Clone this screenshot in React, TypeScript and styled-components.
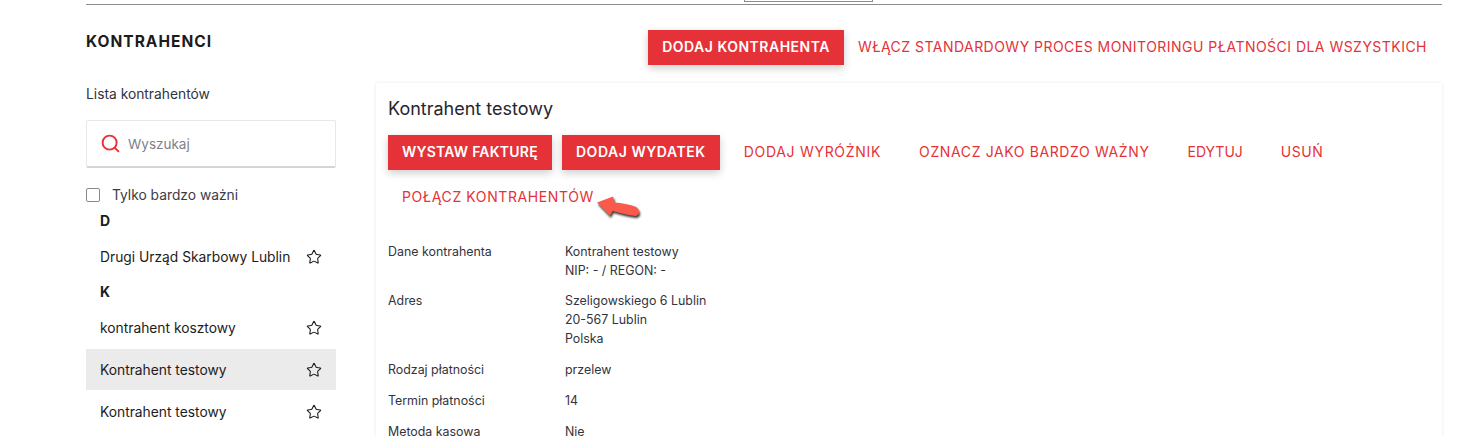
import styled, { createGlobalStyle } from "styled-components";
import { Search, Star } from "lucide-react";

const groups = [
  { letter: "D", items: [{ name: "Drugi Urząd Skarbowy Lublin" }] },
  {
    letter: "K",
    items: [
      { name: "kontrahent kosztowy" },
      { name: "Kontrahent testowy", active: true },
      { name: "Kontrahent testowy" },
    ],
  },
];

const details = [
  { label: "Dane kontrahenta", lines: ["Kontrahent testowy", "NIP: - / REGON: -"] },
  { label: "Adres", lines: ["Szeligowskiego 6 Lublin", "20-567 Lublin", "Polska"] },
  { label: "Rodzaj płatności", lines: ["przelew"] },
  { label: "Termin płatności", lines: ["14"] },
  { label: "Metoda kasowa", lines: ["Nie"] },
];

const arrowPath =
  "M2 7.5 L18 1.5 L19.5 7.5 C27 8 34 9.5 40 11.5 C45 13.5 45.5 20 41 21 C33 20.5 25 18 17.5 16 L15 21 Z";

export default function App() {
  return (
    <Page>
      <GlobalStyle />
      <TopTab />
      <Content>
        <Header>
          <PageTitle>KONTRAHENCI</PageTitle>
          <HeaderActions>
            <PrimaryButton>DODAJ KONTRAHENTA</PrimaryButton>
            <TextButton $tracking={0.47}>
              WŁĄCZ STANDARDOWY PROCES MONITORINGU PŁATNOŚCI DLA WSZYSTKICH
            </TextButton>
          </HeaderActions>
        </Header>
        <Columns>
          <Sidebar>
            <ListTitle>Lista kontrahentów</ListTitle>
            <SearchBox>
              <Search size={21} color="#e53238" strokeWidth={2.2} />
              <span>Wyszukaj</span>
            </SearchBox>
            <CheckRow>
              <CheckBox />
              <span>Tylko bardzo ważni</span>
            </CheckRow>
            {groups.map((group) => (
              <div key={group.letter}>
                <Letter>{group.letter}</Letter>
                {group.items.map((item, i) => (
                  <ListItem key={i} $active={item.active}>
                    <span>{item.name}</span>
                    <Star size={16} color="#1c1c1c" strokeWidth={1.6} />
                  </ListItem>
                ))}
              </div>
            ))}
          </Sidebar>
          <Panel>
            <PanelTitle>Kontrahent testowy</PanelTitle>
            <Toolbar>
              <PrimaryButton $tracking={0.24}>WYSTAW FAKTURĘ</PrimaryButton>
              <PrimaryButton $tracking={0.55}>DODAJ WYDATEK</PrimaryButton>
              <TextButton $tracking={0.7}>DODAJ WYRÓŻNIK</TextButton>
              <TextButton $tracking={0.62}>OZNACZ JAKO BARDZO WAŻNY</TextButton>
              <TextButton $tracking={0}>EDYTUJ</TextButton>
              <TextButton>USUŃ</TextButton>
              <TextButton $tracking={0.6}>
                POŁĄCZ KONTRAHENTÓW
                <ArrowMark width="50" height="28" viewBox="0 0 50 28">
                  <path d={arrowPath} fill="#fa5a4c" />
                </ArrowMark>
              </TextButton>
            </Toolbar>
            <Details>
              {details.map((row) => (
                <DetailRow key={row.label}>
                  <span>{row.label}</span>
                  <div>
                    {row.lines.map((line) => (
                      <div key={line}>{line}</div>
                    ))}
                  </div>
                </DetailRow>
              ))}
            </Details>
          </Panel>
        </Columns>
      </Content>
    </Page>
  );
}

const GlobalStyle = createGlobalStyle`
  html, body {
    margin: 0;
    padding: 0;
    background: #fff;
    overflow: hidden;
  }
`;

const Page = styled.div`
  width: 1482px;
  height: 436px;
  overflow: hidden;
  font-family: "Inter", "Liberation Sans", sans-serif;
  color: #1f1f1f;
  box-sizing: border-box;
`;

const TopTab = styled.div`
  width: 129px;
  height: 2px;
  margin-left: 744px;
  border: 1px solid #8c8c8c;
  border-top: 0;
  box-sizing: border-box;
`;

const Content = styled.div`
  margin: 2px 40px 0 86px;
  border-top: 1px solid #8c8c8c;
`;

const Header = styled.div`
  display: flex;
  justify-content: space-between;
  align-items: flex-start;
  height: 78px;
  padding-top: 25px;
  box-sizing: border-box;
`;

const PageTitle = styled.h1`
  margin: 3px 0 0;
  font-size: 15.5px;
  line-height: 18px;
  font-weight: 700;
  letter-spacing: 1px;
  color: #1c1c1c;
`;

const HeaderActions = styled.div`
  display: flex;
  align-items: center;
  padding-right: 1px;
`;

const PrimaryButton = styled.button<{ $tracking?: number }>`
  height: 35px;
  padding: 0 14px 2px;
  border: 0;
  background: #e53238;
  color: #fff;
  font-family: inherit;
  font-size: 14px;
  font-weight: 600;
  letter-spacing: ${(p) => p.$tracking ?? 0.5}px;
  white-space: nowrap;
  box-shadow: 0 3px 8px rgba(0, 0, 0, 0.2);
`;

const TextButton = styled.button<{ $tracking?: number }>`
  position: relative;
  height: 35px;
  padding: 0 14px 2px;
  border: 0;
  background: none;
  color: #e53238;
  font-family: inherit;
  font-size: 14px;
  font-weight: 400;
  letter-spacing: ${(p) => p.$tracking ?? 0.5}px;
  white-space: nowrap;
`;

const ArrowMark = styled.svg`
  position: absolute;
  left: 207px;
  top: 15px;
  filter: drop-shadow(1.5px 2px 1.2px rgba(0, 0, 0, 0.8));
`;

const Columns = styled.div`
  display: grid;
  grid-template-columns: 250px 1066px;
  column-gap: 40px;
`;

const Sidebar = styled.aside`
  display: flex;
  flex-direction: column;
`;

const ListTitle = styled.div`
  margin-top: 3px;
  font-size: 13.8px;
  line-height: 16px;
  color: #33333d;
`;

const SearchBox = styled.div`
  display: flex;
  align-items: center;
  gap: 7px;
  height: 48px;
  margin-top: 18px;
  padding-left: 13px;
  border: 1px solid #e8e8e8;
  border-bottom: 2px solid #d4d4d4;
  border-radius: 2px;
  box-sizing: border-box;
  font-size: 13.5px;
  color: #80808a;
`;

const CheckRow = styled.div`
  display: flex;
  align-items: center;
  gap: 12px;
  margin: 19px 0 4px;
  font-size: 13.8px;
  line-height: 16px;
  color: #3c3c48;
`;

const CheckBox = styled.span`
  width: 12px;
  height: 12px;
  border: 1px solid #8a8a8a;
  border-radius: 2px;
`;

const Letter = styled.div`
  height: 29px;
  padding: 5px 14px 0;
  box-sizing: border-box;
  font-size: 14px;
  line-height: 17px;
  font-weight: 700;
  color: #1c1c1c;
`;

const ListItem = styled.div<{ $active?: boolean }>`
  display: flex;
  align-items: center;
  justify-content: space-between;
  height: 41px;
  margin-bottom: 1px;
  padding: 0 14px;
  font-size: 13.8px;
  color: #1c1c1c;
  background: ${(p) => (p.$active ? "#ebebeb" : "transparent")};
`;

const Panel = styled.section`
  padding: 14px 12px 0;
  height: 360px;
  box-shadow: 0 0 3px rgba(0, 0, 0, 0.1);
`;

const PanelTitle = styled.h2`
  margin: 0;
  font-size: 18px;
  line-height: 24px;
  font-weight: 400;
  color: #26262e;
`;

const Toolbar = styled.div`
  display: flex;
  flex-wrap: wrap;
  gap: 10px;
  margin-top: 14px;
`;

const Details = styled.div`
  margin-top: 27px;
  font-size: 12.4px;
  line-height: 19px;
  color: #33333d;
`;

const DetailRow = styled.div`
  display: grid;
  grid-template-columns: 177px 1fr;
  margin-bottom: 12px;

  &:first-child {
    margin-bottom: 11px;
  }
`;
